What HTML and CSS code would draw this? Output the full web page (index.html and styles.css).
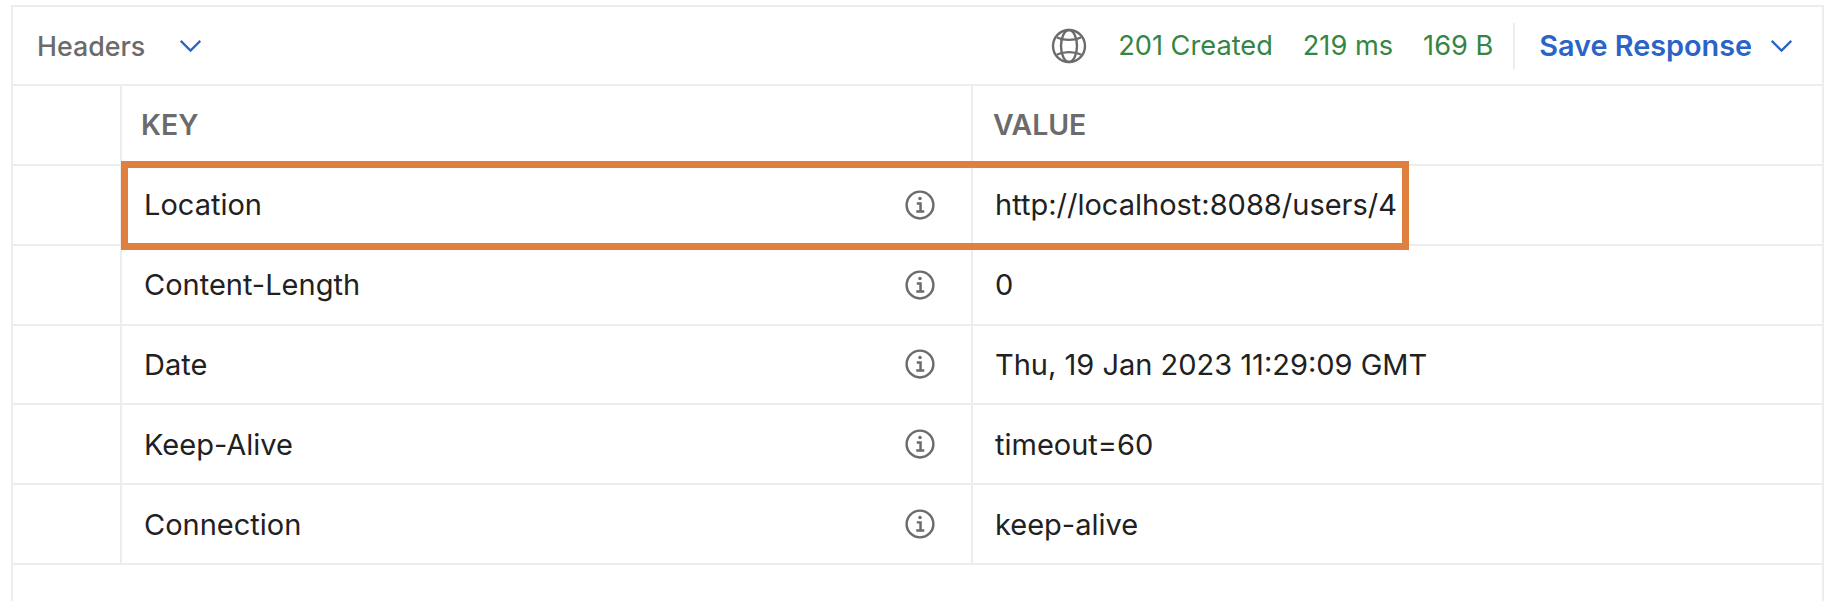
FILE: index.html
```html
<!DOCTYPE html>
<html lang="en">
<head>
<meta charset="utf-8">
<title>Response headers</title>
<link rel="stylesheet" href="styles.css">
</head>
<body>
<div class="panel">
  <div class="bar">
    <div class="tab"><span>Headers</span>
      <svg class="chev" viewBox="0 0 20 12"><path d="M1.5 1.5l8.5 8.5 8.5-8.5"/></svg>
    </div>
    <div class="meta">
      <svg class="globe" viewBox="0 0 36 36"><circle cx="18" cy="18" r="16"/><ellipse cx="18" cy="18" rx="8" ry="16"/><path d="M6 9.5c7 3.2 17 3.2 24 0M6 26.5c7-3.2 17-3.2 24 0"/></svg>
      <span class="ok status">201 Created</span>
      <span class="ok time">219 ms</span>
      <span class="ok size">169 B</span>
      <span class="sep"></span>
      <span class="save">Save Response</span>
      <svg class="chev" viewBox="0 0 20 12"><path d="M1.5 1.5l8.5 8.5 8.5-8.5"/></svg>
    </div>
  </div>
  <div class="row head"><div class="gut"></div><div class="key">KEY</div><div class="val">VALUE</div></div>
  <div class="row"><div class="gut"></div><div class="key"><span>Location</span><svg class="info" viewBox="0 0 28 28"><circle cx="14" cy="14" r="12.5"/><path d="M11 12.5h3.5V20M10.5 20h7.5"/><circle class="dot" cx="14" cy="8" r="1.6"/></svg></div><div class="val">http://localhost:8088/users/4</div></div>
  <div class="row"><div class="gut"></div><div class="key"><span>Content-Length</span><svg class="info" viewBox="0 0 28 28"><circle cx="14" cy="14" r="12.5"/><path d="M11 12.5h3.5V20M10.5 20h7.5"/><circle class="dot" cx="14" cy="8" r="1.6"/></svg></div><div class="val">0</div></div>
  <div class="row"><div class="gut"></div><div class="key"><span>Date</span><svg class="info" viewBox="0 0 28 28"><circle cx="14" cy="14" r="12.5"/><path d="M11 12.5h3.5V20M10.5 20h7.5"/><circle class="dot" cx="14" cy="8" r="1.6"/></svg></div><div class="val">Thu, 19 Jan 2023 11:29:09 GMT</div></div>
  <div class="row"><div class="gut"></div><div class="key"><span>Keep-Alive</span><svg class="info" viewBox="0 0 28 28"><circle cx="14" cy="14" r="12.5"/><path d="M11 12.5h3.5V20M10.5 20h7.5"/><circle class="dot" cx="14" cy="8" r="1.6"/></svg></div><div class="val">timeout=60</div></div>
  <div class="row"><div class="gut"></div><div class="key"><span>Connection</span><svg class="info" viewBox="0 0 28 28"><circle cx="14" cy="14" r="12.5"/><path d="M11 12.5h3.5V20M10.5 20h7.5"/><circle class="dot" cx="14" cy="8" r="1.6"/></svg></div><div class="val">keep-alive</div></div>
  <div class="highlight"></div>
</div>
</body>
</html>
```
FILE: styles.css
```css
* { box-sizing: border-box; }
html, body { margin: 0; background: #fff; }
body { height: 614px; overflow: hidden; font-family: Inter, "Liberation Sans", sans-serif; color: #212121; }
.panel { position: relative; margin: 5px 0 0 11px; width: 1813px; height: 596px; border: 2px solid #ededed; border-bottom: 0; }
.bar { display: flex; justify-content: space-between; align-items: center; height: 79px; padding: 0 29px 0 24px; border-bottom: 2px solid #ededed; }
.tab { display: flex; align-items: center; gap: 34px; font-size: 26.8px; font-weight: 500; color: #6b6b6b; }
.meta { display: flex; align-items: center; font-size: 27.2px; }
.chev { width: 23px; height: 14px; fill: none; stroke: #2a64c8; stroke-width: 2; }
.globe { width: 36px; height: 36px; fill: none; stroke: #6b6b6b; stroke-width: 2.4; margin-right: 31px; }
.ok { color: #358545; }
.time { margin-left: 30px; }
.size { margin-left: 30px; }
.sep { width: 2px; height: 46px; background: #ededed; margin: 0 24px 0 20px; }
.save { color: #2a64c8; font-weight: 600; font-size: 28.8px; margin-right: 18px; }
.row { display: grid; grid-template-columns: 109px 851px 1fr; height: 79.85px; border-bottom: 2px solid #ededed; font-size: 29px; }
.row > div { display: flex; align-items: center; justify-content: space-between; }
.gut { border-right: 2px solid #ededed; }
.key { padding: 0 36px 0 22px; border-right: 2px solid #ededed; }
.val { padding: 0 22px; justify-content: flex-start !important; }
.head { font-size: 28.4px; font-weight: 600; color: #6b6b6b; }
.head .key { padding-left: 19px; }
.head .val { padding-left: 20px; }
.info { width: 30px; height: 30px; fill: none; stroke: #6b6b6b; stroke-width: 2.3; }
.info .dot { fill: #6b6b6b; stroke: none; }
.highlight { position: absolute; left: 108px; top: 154px; width: 1288px; height: 89px; border: 7px solid #e0803e; pointer-events: none; }
```
